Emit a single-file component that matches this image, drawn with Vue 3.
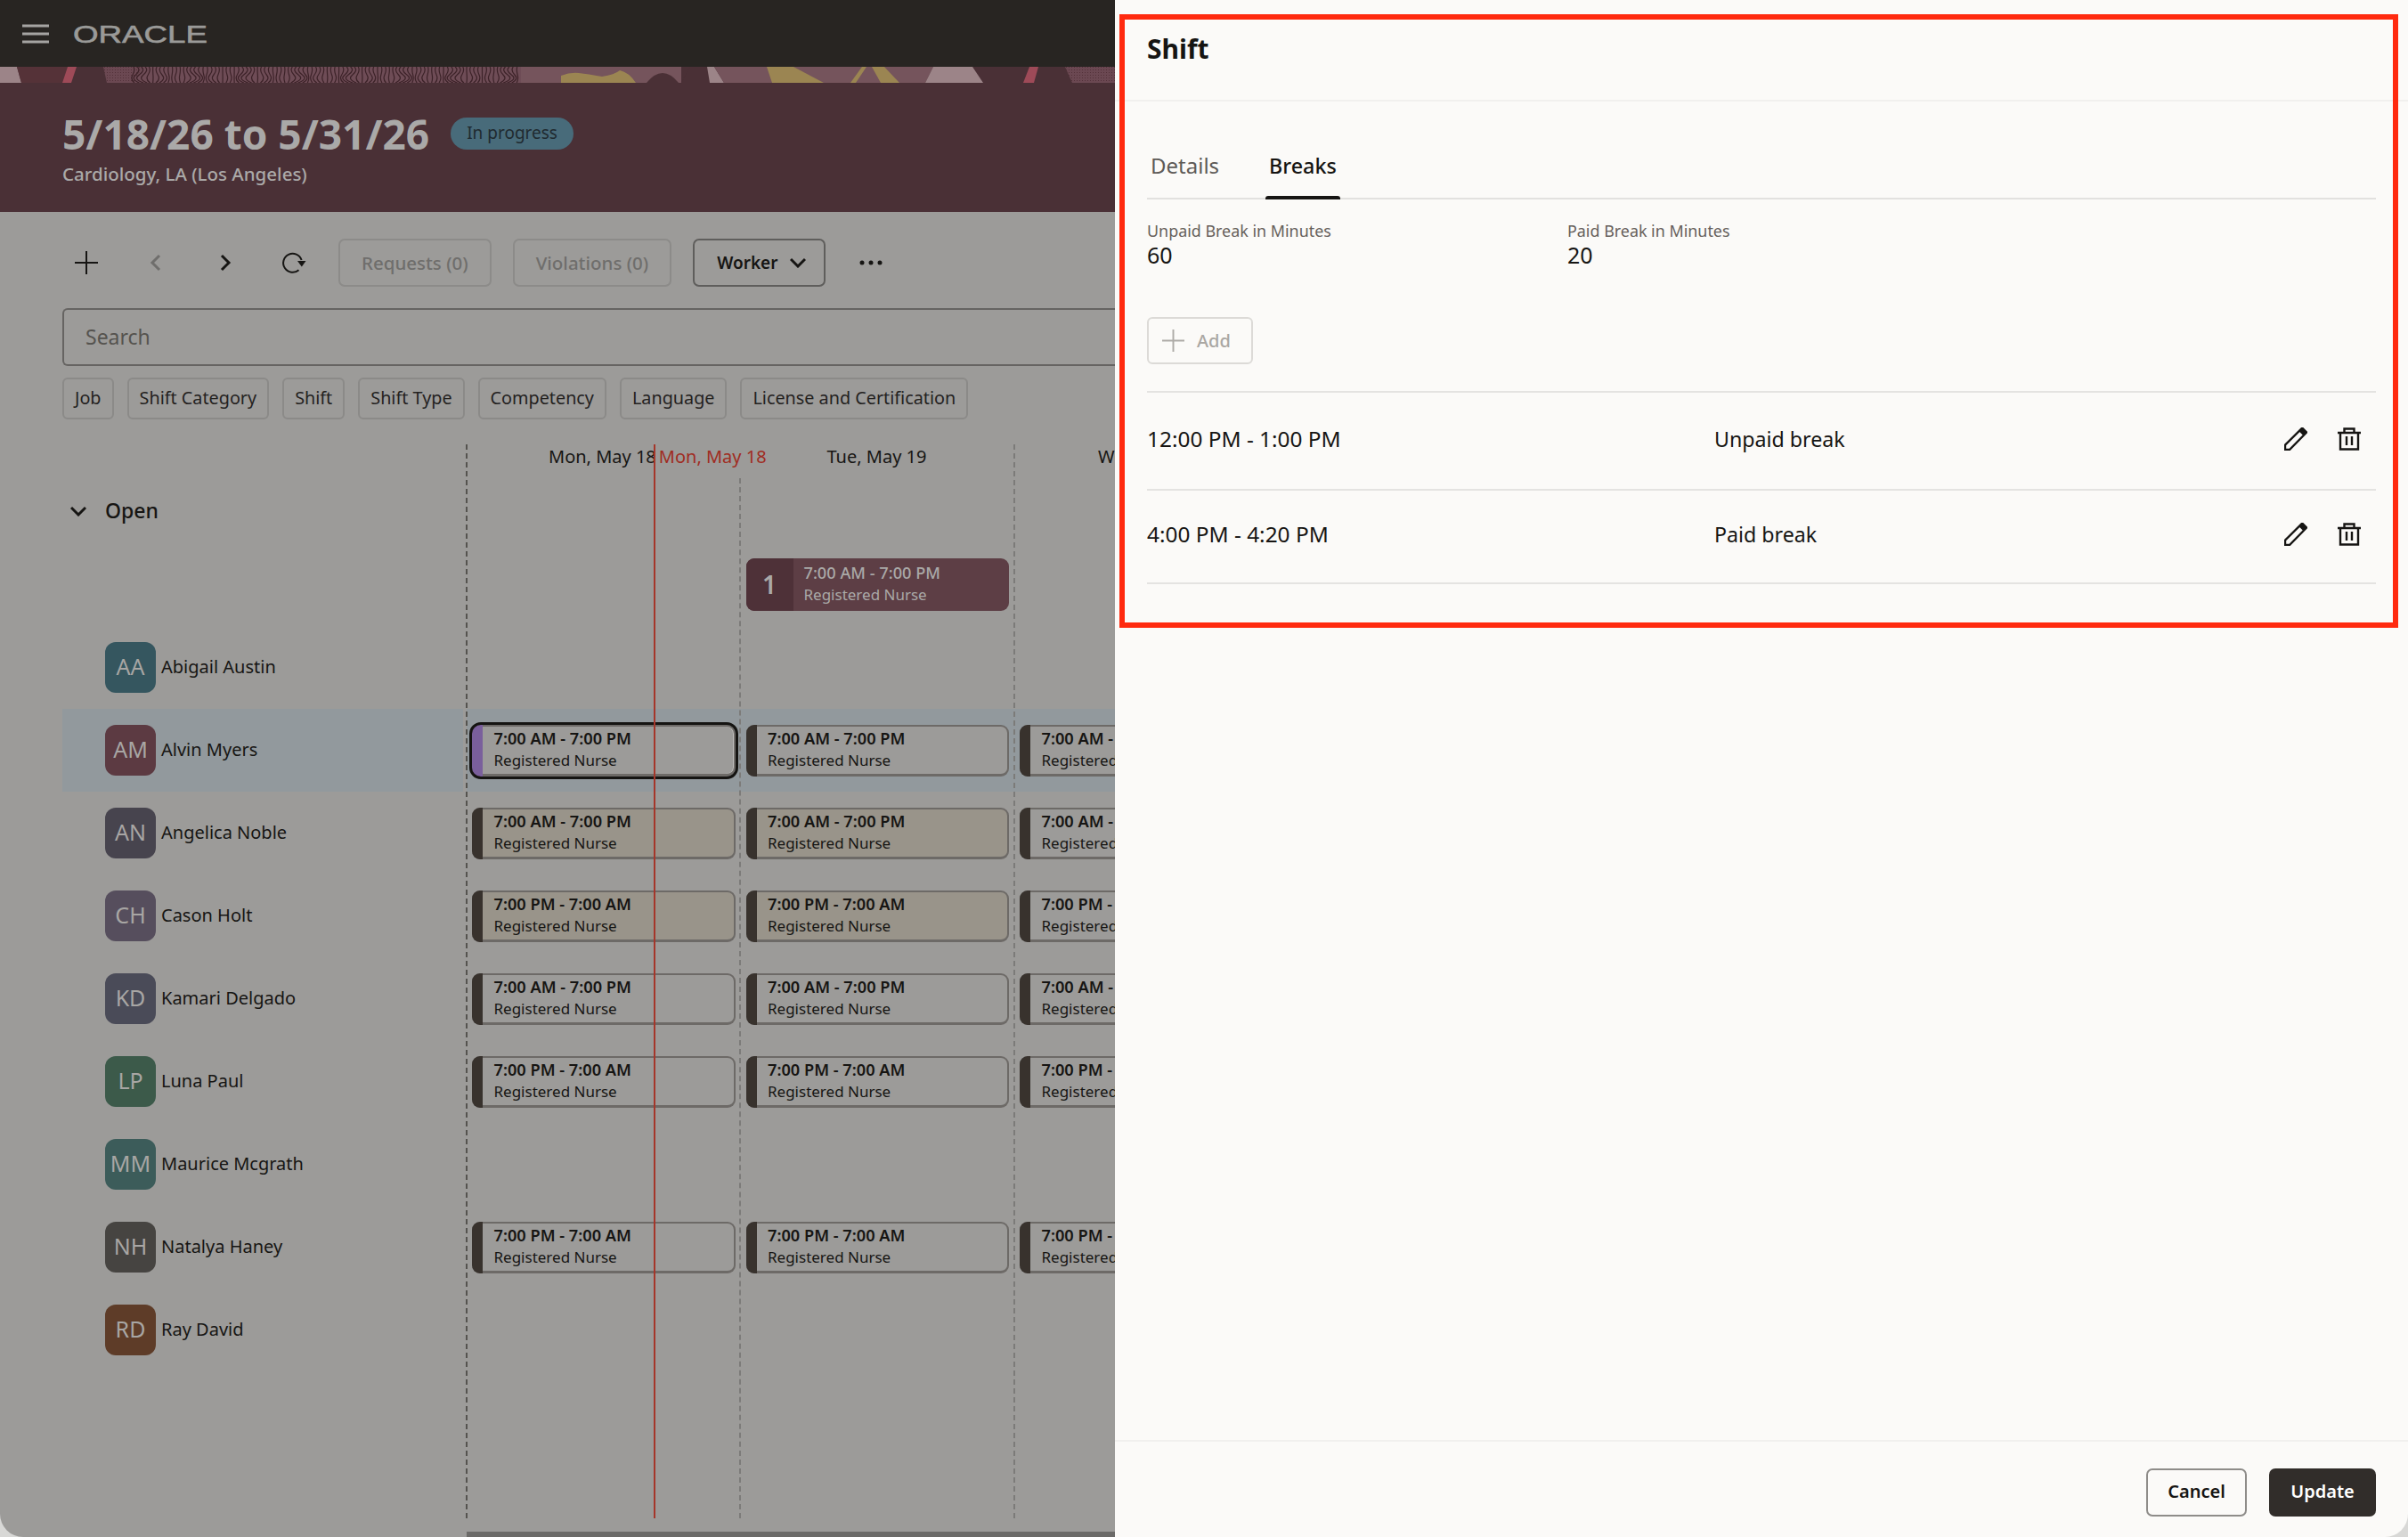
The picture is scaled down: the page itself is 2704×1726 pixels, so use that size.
<template>
  <div class="screen">
    <section class="page">
      <header class="topbar">
        <svg class="burger" viewBox="0 0 30 22"><path d="M0 2h30M0 11h30M0 20h30" /></svg>
        <svg class="logo" viewBox="0 0 151 34"><text x="0" y="27" textLength="151" lengthAdjust="spacingAndGlyphs">ORACLE</text></svg>
      </header>

      <svg class="banner" viewBox="0 0 1252 18" preserveAspectRatio="none">
        <defs>
          <pattern id="hatch" width="3" height="3" patternUnits="userSpaceOnUse">
            <rect width="3" height="3" fill="#6b4852" />
            <rect width="1" height="1" fill="#533139" />
          </pattern>
        </defs>
        <rect width="1252" height="18" fill="#4a3036" />
        <polygon points="0,0 19,0 24,18 0,18" fill="#9c8488" />
        <polygon points="19,0 76,0 70,18 24,18" fill="#553238" />
        <polygon points="76,0 86,0 80,18 70,18" fill="#9e4a58" />
        <polygon points="116,0 160,0 150,18 120,18" fill="url(#hatch)" />
        <polygon points="160,0 630,0 630,18 150,18" fill="#6e4c56" />
        <path v-for="(d, i) in woodLines" :key="i" :d="d" class="wood" />
        <rect x="585" width="180" height="18" fill="#75545c" />
        <path d="M630 18V10Q640 6 650 7T676 11Q690 9 696 4 706 6 714 18Z" fill="#9b8552" />
        <path d="M726 18Q744-4 762 18Z" fill="#4a3036" />
        <polygon points="775,0 794,0 797,18 765,18" fill="#4a3036" />
        <polygon points="794,0 802,0 813,18 797,18" fill="#9c8488" />
        <polygon points="802,0 1048,0 1039,18 813,18" fill="#75545c" />
        <polygon points="861,0 891,0 925,18 867,18" fill="#9b8552" />
        <polygon points="968,0 973,0 961,18 955,18" fill="#9b8552" />
        <polygon points="979,0 993,0 1010,18 989,18" fill="#9b8552" />
        <polygon points="1048,0 1092,0 1104,18 1039,18" fill="#9c8488" />
        <polygon points="1156,0 1166,0 1161,18 1149,18" fill="#9e4a58" />
        <polygon points="1196,0 1252,0 1252,18 1204,18" fill="url(#hatch)" />
      </svg>

      <div class="hero">
        <div class="hero-line">
          <h1>5/18/26 to 5/31/26</h1>
          <span class="status">In progress</span>
        </div>
        <p>Cardiology, LA (Los Angeles)</p>
      </div>

      <div class="toolbar">
        <button class="icon-btn">
          <svg viewBox="0 0 26 26"><path d="M13 0v26M0 13h26" class="line" /></svg>
        </button>
        <button class="icon-btn">
          <svg viewBox="0 0 26 26"><path d="M17 5l-8 8 8 8" class="line thick muted" /></svg>
        </button>
        <button class="icon-btn">
          <svg viewBox="0 0 26 26"><path d="M9 5l8 8-8 8" class="line thick" /></svg>
        </button>
        <button class="icon-btn refresh">
          <svg viewBox="0 0 30 30"><path d="M21.5 23.2A10.5 10.5 0 1 1 24.6 12" class="line" /><path d="M20 13h9.5l-4.7 6.5z" class="solid" /></svg>
        </button>
        <button class="tool-btn disabled">Requests (0)</button>
        <button class="tool-btn disabled">Violations (0)</button>
        <button class="tool-btn worker">
          <span>Worker</span>
          <svg viewBox="0 0 18 12"><path d="M1 2l8 8 8-8" class="line thick" /></svg>
        </button>
        <button class="icon-btn">
          <svg viewBox="0 0 26 26"><circle cx="3" cy="13" r="2.5" class="solid" /><circle cx="13" cy="13" r="2.5" class="solid" /><circle cx="23" cy="13" r="2.5" class="solid" /></svg>
        </button>
      </div>

      <div class="search">Search</div>

      <div class="filters">
        <span v-for="f in filters" :key="f" class="filter">{{ f }}</span>
      </div>

      <div class="schedule">
        <div class="grid-lines">
          <i class="solid-line" style="left: 453px"></i>
          <i class="dash-line low" style="left: 760px"></i>
          <i class="dash-line" style="left: 1068px"></i>
          <i class="now-line" style="left: 664px"></i>
        </div>

        <div class="row head">
          <span></span>
          <div class="day first"><span>Mon, May 18</span><span class="today">Mon, May 18</span></div>
          <div class="day second">Tue, May 19</div>
          <div class="day third">Wed, May 20</div>
        </div>

        <div class="open-label">
          <svg viewBox="0 0 18 12"><path d="M1 2l8 8 8-8" class="line thick" /></svg>
          <span>Open</span>
        </div>

        <div class="row">
          <span></span>
          <span></span>
          <div class="card open-card">
            <span class="count">1</span>
            <div class="card-text">
              <strong>7:00 AM - 7:00 PM</strong>
              <span>Registered Nurse</span>
            </div>
          </div>
        </div>

        <div v-for="w in workers" :key="w.initials" class="row" :class="{ picked: w.picked }">
          <div class="person">
            <span class="avatar" :style="{ background: w.color }">{{ w.initials }}</span>
            <span class="person-name">{{ w.name }}</span>
          </div>
          <template v-if="w.time">
            <div v-for="c in 3" :key="c" class="cell">
              <div class="card" :class="{ tan: w.tan && c < 3, selected: w.picked && c === 1 }">
                <i class="bar"></i>
                <div class="card-text">
                  <strong>{{ w.time }}</strong>
                  <span>Registered Nurse</span>
                </div>
              </div>
            </div>
          </template>
        </div>

        <div class="scrollbar"></div>
      </div>
    </section>

    <aside class="panel">
      <div class="panel-head">Shift</div>

      <div class="panel-body">
        <nav class="tabs">
          <a>Details</a>
          <a class="active">Breaks</a>
        </nav>

        <div class="fields">
          <div>
            <label>Unpaid Break in Minutes</label>
            <div class="value">60</div>
          </div>
          <div>
            <label>Paid Break in Minutes</label>
            <div class="value">20</div>
          </div>
        </div>

        <button class="add-btn">
          <svg viewBox="0 0 26 26"><path d="M13 0v26M0 13h26" /></svg>
          Add
        </button>

        <div class="breaks">
          <div v-for="b in breaks" :key="b.time" class="break-row">
            <span class="break-time">{{ b.time }}</span>
            <span class="break-type">{{ b.type }}</span>
            <button class="row-icon">
              <svg viewBox="0 0 26 26">
                <path d="M1 25v-5.4L20.2 .6l4.9 4.9L6 25z" class="outline" />
                <path d="M16.5 4.2l5 5 3.6-3.7-4.9-4.9z" class="solid" />
              </svg>
            </button>
            <button class="row-icon">
              <svg viewBox="0 0 26 26">
                <path d="M0 6h26M7.5 6V1.5h11V6M3 6v18.5h20V6M10 10v10M16 10v10" class="outline" />
              </svg>
            </button>
          </div>
        </div>
      </div>

      <footer class="panel-foot">
        <button class="cancel">Cancel</button>
        <button class="update">Update</button>
      </footer>
    </aside>

    <div class="highlight"></div>
  </div>
</template>

<script setup>
const filters = ['Job', 'Shift Category', 'Shift', 'Shift Type', 'Competency', 'Language', 'License and Certification'];

const day = '7:00 AM - 7:00 PM';
const night = '7:00 PM - 7:00 AM';

const workers = [
  { initials: 'AA', name: 'Abigail Austin', color: '#35565f' },
  { initials: 'AM', name: 'Alvin Myers', color: '#5c3a42' },
  { initials: 'AN', name: 'Angelica Noble', color: '#47444e' },
  { initials: 'CH', name: 'Cason Holt', color: '#564e5d' },
  { initials: 'KD', name: 'Kamari Delgado', color: '#4a4b58' },
  { initials: 'LP', name: 'Luna Paul', color: '#3c5a4a' },
  { initials: 'MM', name: 'Maurice Mcgrath', color: '#3c5c5a' },
  { initials: 'NH', name: 'Natalya Haney', color: '#464441' },
  { initials: 'RD', name: 'Ray David', color: '#5e3c28' },
];

workers[1].time = day;
workers[1].picked = true;
workers[2].time = day;
workers[2].tan = true;
workers[3].time = night;
workers[3].tan = true;
workers[4].time = day;
workers[5].time = night;
workers[7].time = night;

const breaks = [
  { time: '12:00 PM - 1:00 PM', type: 'Unpaid break' },
  { time: '4:00 PM - 4:20 PM', type: 'Paid break' },
];

// the strip under the top bar, wavy lines like wood grain
const woodLines = Array.from({ length: 100 }, (_, i) => {
  const x = 150 + i * 4.35;
  const w = Math.sin(i * 0.7) * 3 + Math.cos(i * 0.23) * 2;
  return `M${x} 0q${w} 4 ${-w / 2} 9t${w} 9`;
});
</script>

<style scoped>
.screen {
  position: relative;
  display: flex;
  width: 2704px;
  height: 1726px;
  overflow: hidden;
  border-radius: 0 0 26px 26px;
  font-family: "Noto Sans", sans-serif;
  color: #161513;
}

button {
  font-family: inherit;
  cursor: pointer;
}

.line {
  fill: none;
  stroke: #161513;
  stroke-width: 2;
}

.thick {
  stroke-width: 3;
}

.muted {
  stroke: #6f6e6c;
}

.solid {
  fill: #161513;
}

.page {
  width: 1252px;
  flex: none;
  overflow: hidden;
  background: #9c9b99;
}

.topbar {
  display: flex;
  align-items: center;
  gap: 27px;
  height: 75px;
  padding-left: 25px;
  box-sizing: border-box;
  background: #282522;
}

.burger {
  width: 30px;
  height: 22px;
}

.burger path {
  fill: none;
  stroke: #a5a4a2;
  stroke-width: 3;
}

.logo {
  width: 151px;
  height: 34px;
}

.logo text {
  font-family: "Liberation Sans", sans-serif;
  font-size: 28px;
  fill: #9a9a98;
  stroke: #9a9a98;
  stroke-width: 0.6;
}

.banner {
  display: block;
  width: 1252px;
  height: 18px;
}

.wood {
  fill: none;
  stroke: #3c2228;
  stroke-width: 1.2;
}

.hero {
  height: 145px;
  box-sizing: border-box;
  padding: 38px 0 0 70px;
  background: #4a3036;
  color: #aaa9a8;
}

.hero-line {
  display: flex;
  align-items: center;
  gap: 24px;
}

.hero h1 {
  margin: 0;
  font-size: 46px;
  line-height: 38px;
  font-weight: 700;
}

.status {
  height: 36px;
  padding: 0 18px;
  border-radius: 18px;
  background: #486b7a;
  color: #1f2a30;
  font-size: 19px;
  line-height: 35px;
}

.hero p {
  margin: 13px 0 0;
  font-size: 20.5px;
  line-height: 26px;
  font-weight: 500;
}

.toolbar {
  display: flex;
  align-items: center;
  height: 54px;
  margin-top: 30px;
  padding-left: 58px;
}

.icon-btn {
  width: 78px;
  height: 54px;
  padding: 0;
  border: 0;
  background: none;
}

.icon-btn svg {
  width: 26px;
  height: 26px;
  vertical-align: middle;
}

.icon-btn.refresh {
  margin-left: -2px;
}

.icon-btn.refresh svg {
  width: 30px;
  height: 30px;
}

.tool-btn {
  height: 54px;
  margin-right: 24px;
  padding: 0 24px;
  border: 2px solid #8c8b89;
  border-radius: 7px;
  background: none;
  font-size: 20.5px;
  font-weight: 500;
}

.tool-btn.disabled {
  color: #6f6e6c;
}

.icon-btn + .tool-btn {
  margin-left: 12px;
}

.tool-btn.worker {
  display: flex;
  align-items: center;
  gap: 14px;
  margin-right: 12px;
  padding: 0 20px 0 25px;
  border-color: #5f5e5c;
  color: #161513;
  font-size: 19px;
  font-weight: 600;
}

.worker svg {
  width: 18px;
  height: 12px;
}

.search {
  height: 65px;
  margin: 24px 0 0 70px;
  padding-left: 24px;
  box-sizing: border-box;
  border: 2px solid #666462;
  border-right: 0;
  border-radius: 6px 0 0 6px;
  color: #55534f;
  font-size: 23px;
  line-height: 61px;
}

.filters {
  display: flex;
  gap: 15px;
  margin: 13px 0 0 70px;
}

.filter {
  height: 47px;
  padding: 0 12px;
  box-sizing: border-box;
  border: 2px solid #8b8a88;
  border-radius: 6px;
  color: #24221f;
  font-size: 19.8px;
  line-height: 41px;
}

.schedule {
  position: relative;
  margin-top: 28px;
  padding-left: 70px;
  height: 1227px;
}

.grid-lines {
  position: absolute;
  inset: 0 0 21px 70px;
}

.grid-lines i {
  position: absolute;
  top: 0;
  bottom: 0;
}

.solid-line {
  border-left: 2px dashed #55534f;
}

.dash-line {
  border-left: 2px dashed #7c7b79;
}

.dash-line.low {
  top: 38px !important;
}

.now-line {
  width: 2px;
  background: #a5362a;
  z-index: 2;
}

.row {
  display: grid;
  grid-template-columns: 454px 307.5px 307.5px 307.5px;
  height: 93px;
  align-items: stretch;
}

.row.head {
  height: 38px;
  font-size: 20px;
  line-height: 28px;
}

.day {
  white-space: nowrap;
  text-align: left;
}

.day.first {
  display: flex;
  gap: 3px;
  padding-left: 92px;
}

.day.second {
  padding-left: 97px;
}

.day.third {
  padding-left: 94px;
}

.today {
  color: #a02c22;
}

.open-label {
  display: flex;
  align-items: center;
  gap: 21px;
  height: 73px;
  padding-left: 9px;
  font-size: 23px;
  font-weight: 500;
}

.open-label svg {
  width: 18px;
  height: 12px;
}

.open-label span {
  margin-bottom: 2px;
}

.person {
  display: flex;
  align-items: center;
  gap: 6px;
  padding-left: 48px;
  margin-right: 4px;
  font-size: 20px;
}

.person-name {
  margin-bottom: 3px;
}

.avatar {
  width: 57px;
  height: 57px;
  border-radius: 12px;
  color: #a8a6a4;
  font-size: 25px;
  line-height: 54px;
  text-align: center;
}

.cell {
  display: flex;
  align-items: center;
}

.picked .person,
.picked .cell {
  background: #92999d;
}

.card {
  position: relative;
  display: flex;
  align-self: center;
  width: 295.5px;
  height: 58px;
  margin-left: 6px;
  box-sizing: border-box;
  border: 2px solid #6d6a67;
  border-bottom-width: 3px;
  border-left: 0;
  border-radius: 9px;
  background: #9c9b99;
  color: #161513;
}

.bar {
  width: 12px;
  flex: none;
  margin: -2px 0 -3px;
  border-radius: 9px 0 0 9px;
  background: #38322d;
}

.card-text {
  display: flex;
  flex-direction: column;
  padding: 1px 0 0 12.5px;
  white-space: nowrap;
}

.card-text strong {
  font-size: 18.2px;
  line-height: 25px;
  font-weight: 600;
}

.card-text span {
  font-size: 17px;
  line-height: 24px;
}

.tan {
  background: #99948a;
}

.selected {
  outline: 3px solid #151412;
  border-radius: 10px;
  box-shadow: inset -1px 0 0 #c0bfbd;
}

.selected .bar {
  background: #7a5f9c;
}

.open-card {
  grid-column: 3;
  height: 59px;
  border: 0;
  background: #5d3e45;
  color: #aaa9a8;
  overflow: hidden;
}

.count {
  width: 53px;
  flex: none;
  background: #4e3138;
  font-size: 28px;
  font-weight: 600;
  line-height: 59px;
  text-align: center;
}

.open-card .card-text {
  padding-top: 4px;
  padding-left: 12px;
}

.open-card .card-text strong {
  font-weight: 500;
}

.scrollbar {
  position: absolute;
  left: 524px;
  right: 0;
  bottom: 0;
  height: 6px;
  background: #6b6a68;
}

.panel {
  flex: 1;
  display: flex;
  flex-direction: column;
  background: #fbfaf8;
}

.panel-head {
  height: 114px;
  box-sizing: border-box;
  padding: 34px 36px 0;
  border-bottom: 2px solid #f1f0ee;
  font-size: 30px;
  line-height: 42px;
  font-weight: 700;
}

.panel-body {
  flex: 1;
  padding: 0 36px;
}

.tabs {
  display: flex;
  gap: 48px;
  height: 110px;
  box-sizing: border-box;
  align-items: flex-end;
  border-bottom: 2px solid #e2e1df;
  font-size: 24px;
  color: #5e5a57;
}

.tabs a {
  position: relative;
  padding: 0 4px 19px;
  line-height: 34px;
}

.tabs a.active {
  color: #161513;
  font-size: 23.3px;
  font-weight: 500;
}

.tabs a.active::after {
  content: "";
  position: absolute;
  left: 0;
  right: 0;
  bottom: -2px;
  height: 4px;
  border-radius: 3px 3px 0 0;
  background: #161513;
}

.fields {
  display: grid;
  grid-template-columns: 472px 472px;
  margin-top: 22px;
}

.fields label {
  display: block;
  color: #665f5b;
  font-size: 17.9px;
  line-height: 26px;
}

.value {
  font-size: 25px;
  line-height: 28px;
}

.add-btn {
  display: flex;
  align-items: center;
  gap: 14px;
  width: 119px;
  height: 53px;
  margin-top: 56px;
  padding: 0 0 0 15px;
  border: 2px solid #dcdad7;
  border-radius: 6px;
  background: none;
  color: #aaa7a3;
  font-size: 20px;
  font-weight: 500;
}

.add-btn svg {
  width: 25px;
  height: 25px;
}

.add-btn path {
  fill: none;
  stroke: #aeaba7;
  stroke-width: 2;
}

.breaks {
  margin-top: 30px;
  border-top: 2px solid #e4e3e1;
}

.break-row {
  display: flex;
  align-items: center;
  height: 110px;
  box-sizing: border-box;
  padding-bottom: 5px;
  border-bottom: 2px solid #e4e3e1;
  font-size: 24.4px;
}

.break-row:last-child {
  height: 105px;
  padding-bottom: 6px;
}

.break-time {
  width: 637px;
}

.break-type {
  flex: 1;
  font-size: 23.2px;
}

.row-icon {
  width: 60px;
  height: 60px;
  padding: 0;
  border: 0;
  background: none;
}

.row-icon svg {
  width: 26px;
  height: 26px;
  vertical-align: middle;
}

.outline {
  fill: none;
  stroke: #161513;
  stroke-width: 2.4;
}

.panel-foot {
  display: flex;
  justify-content: flex-end;
  gap: 25px;
  height: 109px;
  box-sizing: border-box;
  padding: 30px 36px 0;
  border-top: 2px solid #f1f0ee;
}

.panel-foot button {
  height: 54px;
  padding: 0 0 3px;
  border-radius: 7px;
  font-size: 20px;
  font-weight: 600;
}

.cancel {
  width: 113px;
  border: 2px solid #8e8c89;
  background: none;
  color: #161513;
}

.update {
  width: 120px;
  border: 0;
  background: #312d2a;
  color: #fff;
}

.highlight {
  position: absolute;
  left: 1257px;
  top: 16px;
  width: 1436px;
  height: 689px;
  box-sizing: border-box;
  border: 6px solid #ff2a0f;
  pointer-events: none;
}
</style>

<style>
html,
body {
  background: #d8d8d6;
}
</style>
